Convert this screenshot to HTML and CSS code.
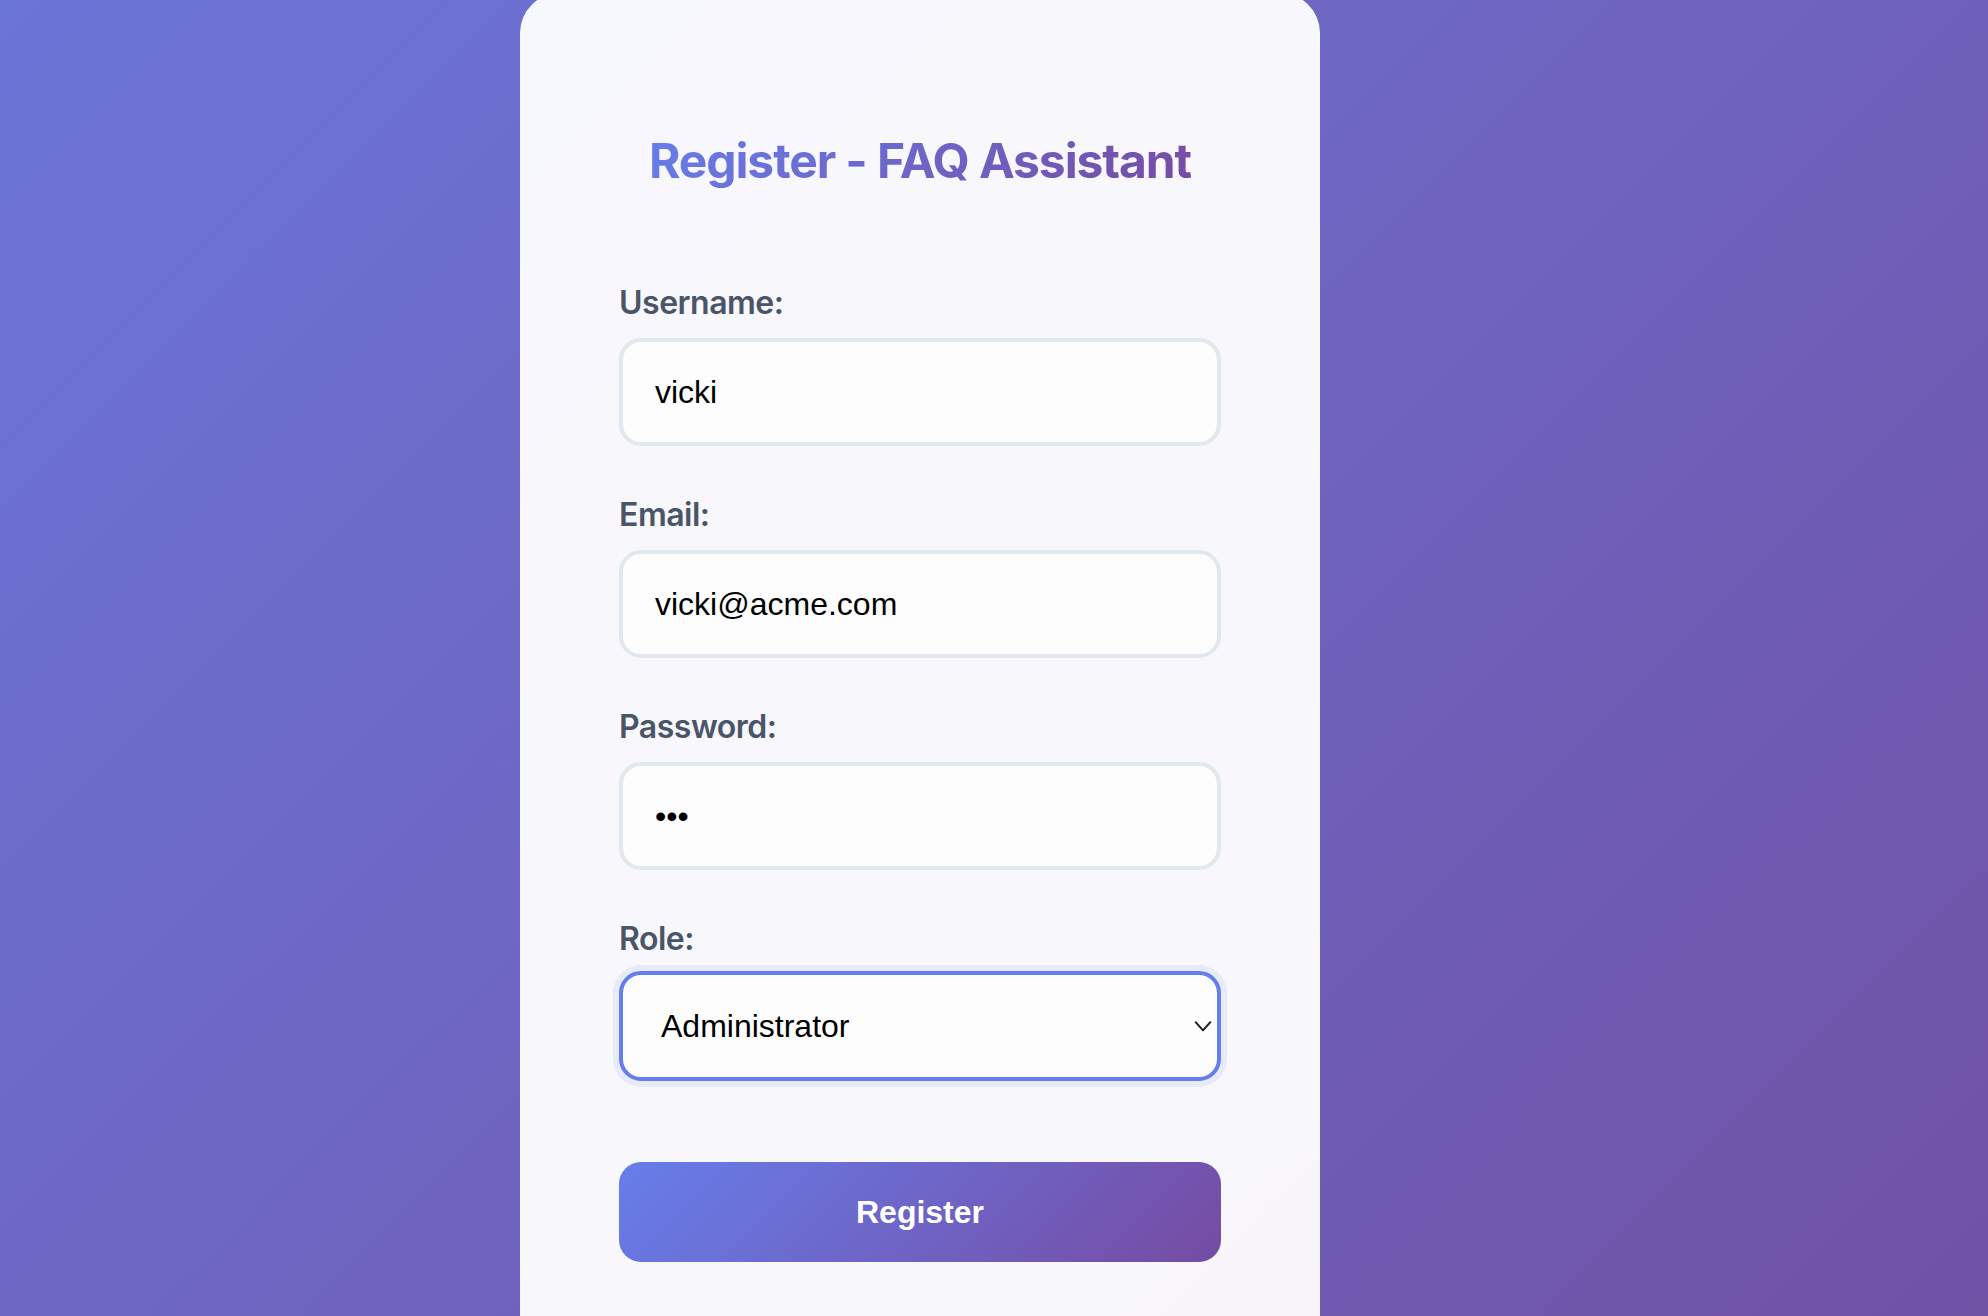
FILE: index.html
```html
<!DOCTYPE html>
<html lang="en">
<head>
<meta charset="utf-8">
<title>Register - FAQ Assistant</title>
<link rel="stylesheet" href="styles.css">
</head>
<body>
<main class="page">
  <section class="card">
    <h1 class="title">Register - FAQ Assistant</h1>
    <form class="form">
      <div class="field">
        <label class="label" for="username">Username:</label>
        <input class="control" id="username" type="text" value="vicki">
      </div>
      <div class="field">
        <label class="label" for="email">Email:</label>
        <input class="control" id="email" type="email" value="vicki@acme.com">
      </div>
      <div class="field">
        <label class="label" for="password">Password:</label>
        <input class="control" id="password" type="password" value="abc">
      </div>
      <div class="field">
        <label class="label label-tight" for="role">Role:</label>
        <div class="select-wrap">
          <select class="control select is-focused" id="role">
            <option>Administrator</option>
            <option>User</option>
          </select>
          <svg class="chevron" width="18" height="11" viewBox="0 0 18 11" aria-hidden="true"><path d="M1.2 1.2 L9 9.8 L16.8 1.2" fill="none" stroke="#1c1c1c" stroke-width="2"/></svg>
        </div>
      </div>
      <button class="btn" type="button">Register</button>
    </form>
  </section>
</main>
</body>
</html>
```
FILE: styles.css
```css
html, body {
  margin: 0;
  padding: 0;
  height: 100%;
}

body {
  overflow: hidden;
  background: linear-gradient(135deg, #6b75d7 0%, #6e64c0 50%, #7052a5 100%);
  font-family: Inter, "Noto Sans", sans-serif;
}

.page {
  display: flex;
  justify-content: center;
  padding-right: 148px;
  height: 100%;
}

.card {
  box-sizing: border-box;
  width: 800px;
  margin-top: -7px;
  padding: 138px 99px 120px;
  background: rgba(255, 255, 255, 0.95);
  border-radius: 40px;
  align-self: flex-start;
}

.title {
  width: fit-content;
  margin: 0 auto 93px;
  font-size: 48px;
  font-weight: 700;
  line-height: normal;
  letter-spacing: -1.1px;
  background: linear-gradient(135deg, #667eea 0%, #764ba2 100%);
  -webkit-background-clip: text;
  background-clip: text;
  color: transparent;
}

.form {
  display: flex;
  flex-direction: column;
}

.field {
  display: flex;
  flex-direction: column;
  margin-bottom: 49px;
}

.label {
  font-size: 32px;
  font-weight: 600;
  line-height: normal;
  letter-spacing: -0.5px;
  color: #4a5568;
  margin-bottom: 16px;
}

.label-tight {
  margin-bottom: 13px;
}

.control {
  box-sizing: border-box;
  width: 100%;
  height: 108px;
  margin: 0;
  padding: 0 32px;
  border: 4px solid #e2e8f0;
  border-radius: 22px;
  background: #fdfdfe;
  font-family: "Liberation Sans", Arial, sans-serif;
  font-size: 32px;
  color: #000;
  outline: none;
}

.select-wrap {
  position: relative;
}

.select {
  -webkit-appearance: none;
  appearance: none;
  height: 110px;
  padding-left: 38px;
}

.select.is-focused {
  border-color: #667eea;
  box-shadow: 0 0 0 6px rgba(102, 126, 234, 0.1);
}

.chevron {
  position: absolute;
  right: 9px;
  top: 50%;
  transform: translateY(-50%);
}

.btn {
  box-sizing: border-box;
  width: 100%;
  height: 100px;
  margin-top: 32px;
  border: none;
  border-radius: 22px;
  background: linear-gradient(135deg, #667eea 0%, #764ba2 100%);
  color: #fff;
  font-family: "Liberation Sans", Arial, sans-serif;
  font-size: 32px;
  font-weight: 700;
}
```
